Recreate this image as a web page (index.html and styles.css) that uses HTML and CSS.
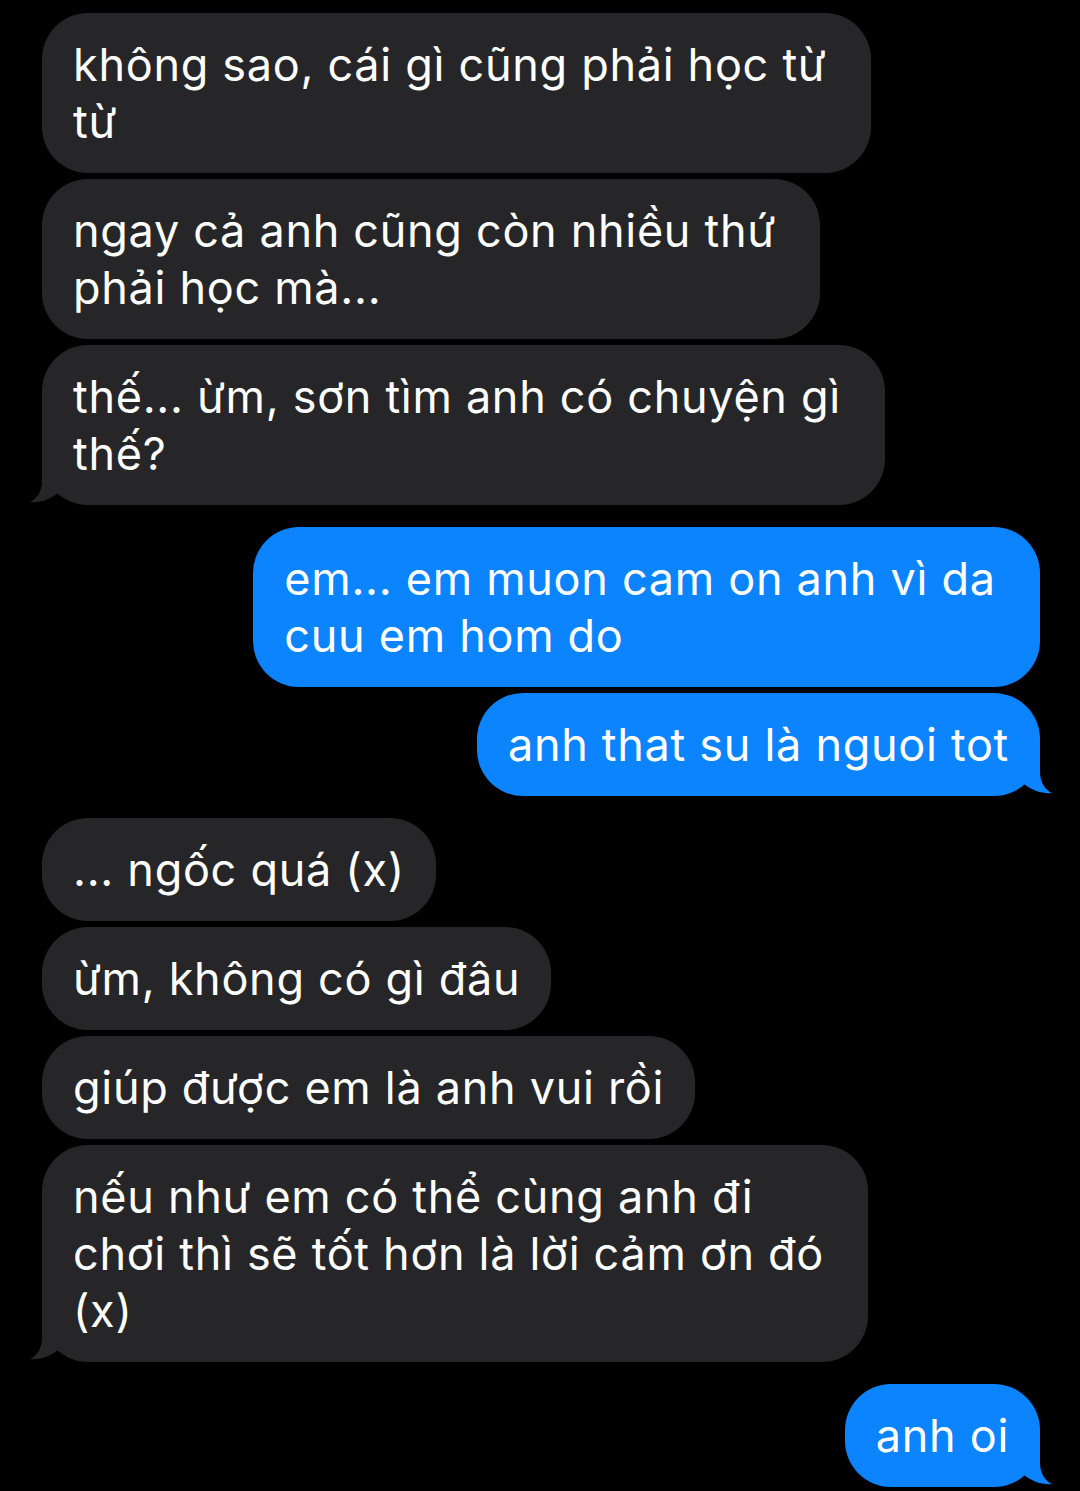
FILE: index.html
```html
<!DOCTYPE html>
<html lang="vi">
<head>
<meta charset="utf-8">
<title>Messages</title>
<link rel="stylesheet" href="styles.css">
</head>
<body>
<div class="chat">
  <div class="group in">
    <div class="bubble">không sao, cái gì cũng phải học từ&nbsp;<br>từ</div>
    <div class="bubble">ngay cả anh cũng còn nhiều thứ&nbsp;<br>phải học mà...</div>
    <div class="bubble tail">thế... ừm, sơn tìm anh có chuyện gì&nbsp;<br>thế?<svg class="tailsvg" viewBox="0 0 30 46" width="30" height="46"><path d="M12 0 L12 22 C12 32 7 40 0 43 C9 44 19 41 28 34 L30 34 L30 0 Z"/></svg></div>
  </div>
  <div class="group out">
    <div class="bubble">em... em muon cam on anh vì da&nbsp;<br>cuu em hom do</div>
    <div class="bubble tail">anh that su là nguoi tot<svg class="tailsvg" viewBox="0 0 30 46" width="30" height="46"><path d="M12 0 L12 22 C12 32 7 40 0 43 C9 44 19 41 28 34 L30 34 L30 0 Z"/></svg></div>
  </div>
  <div class="group in">
    <div class="bubble">... ngốc quá (x)</div>
    <div class="bubble">ừm, không có gì đâu</div>
    <div class="bubble">giúp được em là anh vui rồi</div>
    <div class="bubble tail">nếu như em có thể cùng anh đi&nbsp;<br>chơi thì sẽ tốt hơn là lời cảm ơn đó&nbsp;<br>(x)<svg class="tailsvg" viewBox="0 0 30 46" width="30" height="46"><path d="M12 0 L12 22 C12 32 7 40 0 43 C9 44 19 41 28 34 L30 34 L30 0 Z"/></svg></div>
  </div>
  <div class="group out">
    <div class="bubble tail">anh oi<svg class="tailsvg" viewBox="0 0 30 46" width="30" height="46"><path d="M12 0 L12 22 C12 32 7 40 0 43 C9 44 19 41 28 34 L30 34 L30 0 Z"/></svg></div>
  </div>
</div>
</body>
</html>
```

FILE: styles.css
```css
html, body {
  margin: 0;
  padding: 0;
  background: #000;
}

body {
  font-family: Inter, "Noto Sans", "Liberation Sans", sans-serif;
  color: #fff;
  -webkit-font-smoothing: antialiased;
}

.chat {
  display: flex;
  flex-direction: column;
  gap: 22px;
  padding: 13px 40px 0 42px;
}

.group {
  display: flex;
  flex-direction: column;
  gap: 6px;
}

.group.in {
  align-items: flex-start;
}

.group.out {
  align-items: flex-end;
}

.bubble {
  position: relative;
  font-size: 45px;
  letter-spacing: 0.7px;
  line-height: 57px;
  padding: 23px 31px;
  border-radius: 46px;
  white-space: nowrap;
}

.in .bubble {
  background: #262628;
}

.out .bubble {
  background: #0b84fe;
}

.tailsvg {
  position: absolute;
  bottom: 0;
  display: block;
}

.in .tailsvg {
  left: -12px;
  fill: #262628;
}

.out .tailsvg {
  right: -12px;
  fill: #0b84fe;
  transform: scaleX(-1);
}
```
